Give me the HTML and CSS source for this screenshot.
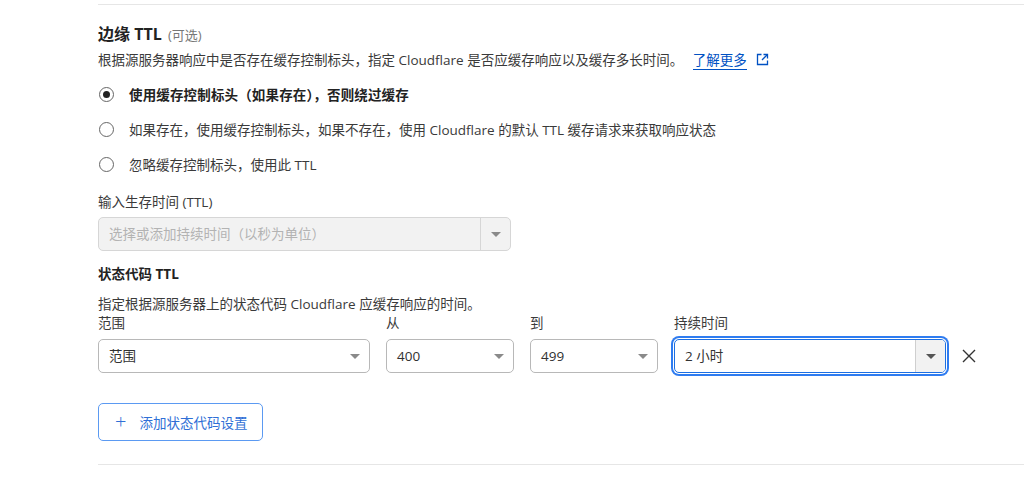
FILE: index.html
```html
<!DOCTYPE html>
<html lang="zh-CN">
<head>
<meta charset="utf-8">
<link rel="stylesheet" href="styles.css">
</head>
<body>
<div class="page">
  <div class="rule"></div>
  <h2 class="title">边缘 TTL <span class="opt">(可选)</span></h2>
  <p class="desc">根据源服务器响应中是否存在缓存控制标头，指定 Cloudflare 是否应缓存响应以及缓存多长时间。 <a class="link" href="#">了解更多</a>
    <svg class="ext" width="13" height="13" viewBox="0 0 13 13" fill="none" stroke="#0051c3" stroke-width="1.3"><path d="M5.5 1.5H1.5V11.5H11.5V7.5"/><path d="M7.5 1.5H11.5V5.5"/><path d="M11.5 1.5L6 7"/></svg>
  </p>
  <div class="radios">
    <label class="radio"><span class="dot checked"></span><span class="rtext strong">使用缓存控制标头（如果存在），否则绕过缓存</span></label>
    <label class="radio"><span class="dot"></span><span class="rtext">如果存在，使用缓存控制标头，如果不存在，使用 Cloudflare 的默认 TTL 缓存请求来获取响应状态</span></label>
    <label class="radio"><span class="dot"></span><span class="rtext">忽略缓存控制标头，使用此 TTL</span></label>
  </div>
  <div class="flabel">输入生存时间 (TTL)</div>
  <div class="select disabled wide">
    <span class="val">选择或添加持续时间（以秒为单位）</span>
    <span class="btn"><span class="tri"></span></span>
  </div>
  <h3 class="subtitle">状态代码 TTL</h3>
  <p class="desc2">指定根据源服务器上的状态代码 Cloudflare 应缓存响应的时间。</p>
  <div class="fields">
    <div class="field f-range">
      <div class="flabel2">范围</div>
      <div class="select"><span class="val">范围</span><span class="arrow"><span class="tri"></span></span></div>
    </div>
    <div class="field f-num">
      <div class="flabel2">从</div>
      <div class="select"><span class="val">400</span><span class="arrow"><span class="tri"></span></span></div>
    </div>
    <div class="field f-num">
      <div class="flabel2">到</div>
      <div class="select"><span class="val">499</span><span class="arrow"><span class="tri"></span></span></div>
    </div>
    <div class="field f-range">
      <div class="flabel2">持续时间</div>
      <div class="select focus"><span class="val">2 小时</span><span class="btn"><span class="tri dark"></span></span></div>
    </div>
    <div class="close">
      <svg width="14" height="14" viewBox="0 0 14 14" stroke="#333" stroke-width="1.4"><path d="M1 1L13 13M13 1L1 13"/></svg>
    </div>
  </div>
  <button class="add"><span class="plus">+</span>添加状态代码设置</button>
  <div class="rule bottom"></div>
</div>
</body>
</html>
```
FILE: styles.css
```css
* { box-sizing: border-box; }
html, body { margin: 0; padding: 0; background: #fff; }
body {
  font-family: "Open Sans", "Noto Sans CJK SC", sans-serif;
  color: #313131;
  font-size: 13.5px;
}
.page { padding: 4px 0 0 98px; width: 1024px; height: 477px; overflow: hidden; }
.rule { border-top: 1px solid #e6e6e6; height: 0; }
.title {
  margin: 19px 0 0; font-size: 16px; line-height: 20px; font-weight: 700; color: #222;
}
.opt { font-size: 13px; font-weight: 400; color: #777; margin-left: 2px; }
.desc { margin: 5px 0 0; line-height: 20px; color: #3a3a3a; }
.link { color: #0051c3; text-decoration: none; border-bottom: 1px solid #0051c3; margin-left: 6px; }
.ext { vertical-align: -1px; margin-left: 6px; }
.radios { margin-top: 7px; }
.radio { display: flex; align-items: center; height: 35px; }
.dot {
  width: 15px; height: 15px; border: 1px solid #666; border-radius: 50%;
  margin-left: 1px; margin-right: 15px; position: relative; flex: none;
}
.dot.checked::after {
  content: ""; position: absolute; left: 3px; top: 3px; width: 7px; height: 7px;
  border-radius: 50%; background: #222;
}
.rtext { line-height: 20px; color: #3a3a3a; }
.rtext.strong { font-weight: 700; color: #222; letter-spacing: 0.15px; }
.flabel { margin-top: 11px; line-height: 18px; color: #3a3a3a; }
.select {
  margin-top: 6px; height: 34px; border: 1px solid #b8b8b8; border-radius: 5px;
  display: flex; align-items: center; position: relative; background: #fff;
}
.select.wide { width: 413px; }
.select.disabled { background: #f2f2f2; border-color: #d6d6d6; color: #b3b3b3; }
.val { flex: 1; padding-left: 10px; line-height: 20px; }
.btn {
  width: 30px; height: 100%; border-left: 1px solid #d6d6d6;
  display: flex; align-items: center; justify-content: center;
}
.arrow { width: 28px; display: flex; align-items: center; justify-content: center; }
.tri {
  width: 0; height: 0; border-left: 5px solid transparent; border-right: 5px solid transparent;
  border-top: 5px solid #8a8a8a;
}
.tri.dark { border-top-color: #555; }
.subtitle { margin: 13px 0 0; font-size: 13.5px; line-height: 20px; font-weight: 700; color: #222; }
.desc2 { margin: 10px 0 0; line-height: 20px; color: #3a3a3a; }
.fields { display: flex; gap: 16px; margin-top: 0; align-items: flex-end; }
.field { display: flex; flex-direction: column; }
.f-range { width: 272px; }
.f-num { width: 128px; }
.flabel2 { line-height: 18px; color: #3a3a3a; }
.field .select { margin-top: 7px; }
.select.focus {
  border: 1px solid #1c6fe3;
  box-shadow: 0 0 0 1px #fff, 0 0 0 3px #2f7cf0;
}
.select.focus .btn { background: #f2f2f2; border-left-color: #cfcfcf; border-radius: 0 4px 4px 0; }
.select.focus .val { color: #333; }
.close { height: 34px; display: flex; align-items: center; margin-left: 0; }
.add {
  margin-top: 30px; width: 165px; height: 38px; border: 1px solid #5b9af2; border-radius: 5px;
  background: #fff; color: #2f6fd6; font-family: "Open Sans", "Noto Sans CJK SC", sans-serif;
  font-size: 13.5px; display: flex; align-items: center; padding: 0 0 0 16px; cursor: pointer;
}
.plus { font-size: 20px; font-weight: 300; margin-right: 13px; line-height: 20px; }
.rule.bottom { margin-top: 23px; }
```
